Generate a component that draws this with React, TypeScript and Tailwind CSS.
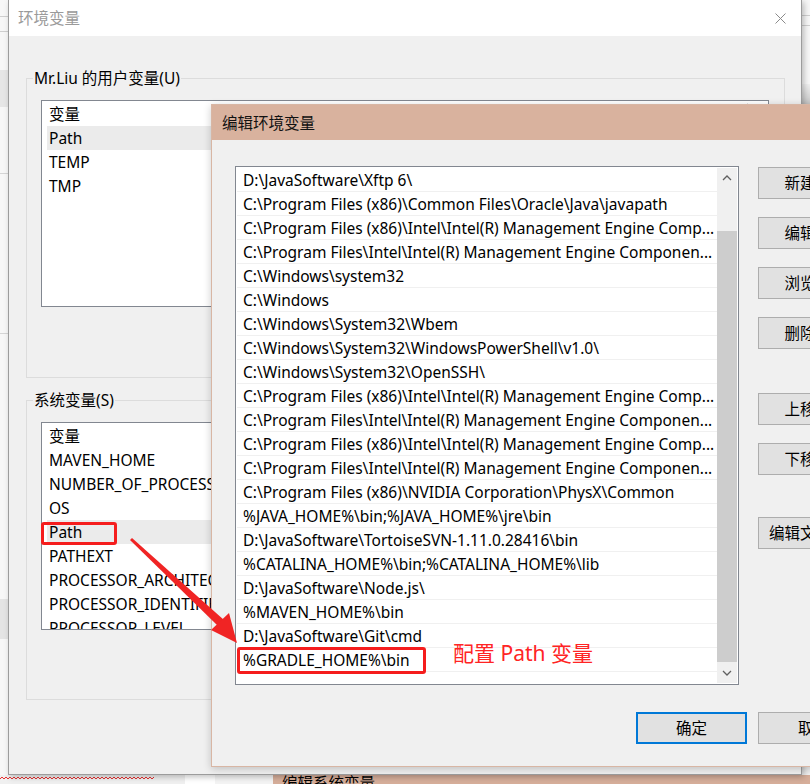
const font = "font-[family-name:'Noto_Sans','Noto_Sans_CJK_SC',sans-serif]";

const userVars = ["Path", "TEMP", "TMP"];

const sysVars = [
  "MAVEN_HOME",
  "NUMBER_OF_PROCESSORS",
  "OS",
  "Path",
  "PATHEXT",
  "PROCESSOR_ARCHITECTURE",
  "PROCESSOR_IDENTIFIER",
  "PROCESSOR_LEVEL",
];

const paths = [
  "D:\\JavaSoftware\\Xftp 6\\",
  "C:\\Program Files (x86)\\Common Files\\Oracle\\Java\\javapath",
  "C:\\Program Files (x86)\\Intel\\Intel(R) Management Engine Comp...",
  "C:\\Program Files\\Intel\\Intel(R) Management Engine Componen...",
  "C:\\Windows\\system32",
  "C:\\Windows",
  "C:\\Windows\\System32\\Wbem",
  "C:\\Windows\\System32\\WindowsPowerShell\\v1.0\\",
  "C:\\Windows\\System32\\OpenSSH\\",
  "C:\\Program Files (x86)\\Intel\\Intel(R) Management Engine Comp...",
  "C:\\Program Files\\Intel\\Intel(R) Management Engine Componen...",
  "C:\\Program Files (x86)\\Intel\\Intel(R) Management Engine Comp...",
  "C:\\Program Files\\Intel\\Intel(R) Management Engine Componen...",
  "C:\\Program Files (x86)\\NVIDIA Corporation\\PhysX\\Common",
  "%JAVA_HOME%\\bin;%JAVA_HOME%\\jre\\bin",
  "D:\\JavaSoftware\\TortoiseSVN-1.11.0.28416\\bin",
  "%CATALINA_HOME%\\bin;%CATALINA_HOME%\\lib",
  "D:\\JavaSoftware\\Node.js\\",
  "%MAVEN_HOME%\\bin",
  "D:\\JavaSoftware\\Git\\cmd",
  "%GRADLE_HOME%\\bin",
];

function VarList({ items, selected, height }: { items: string[]; selected: string; height: string }) {
  return (
    <div className={`ml-[14px] mr-[15px] mt-[12px] overflow-hidden border border-[#828790] bg-white ${height}`}>
      <div className="flex h-[25px] items-center pt-[2px]">
        <div className="w-[705px] shrink-0 pl-[7px]">变量</div>
        <div className="h-full w-px bg-[#e5e5e5]" />
      </div>
      {items.map((name) => (
        <div
          key={name}
          className={`mx-[5px] flex h-[24px] items-center whitespace-nowrap px-[2px] pt-[2px] ${
            name === selected ? "bg-[#ebebeb]" : ""
          }`}
        >
          {name}
        </div>
      ))}
    </div>
  );
}

function Chevron({ up }: { up?: boolean }) {
  return (
    <svg width="10" height="6" viewBox="0 0 10 6">
      <polyline
        points={up ? "1,5 5,1 9,5" : "1,1 5,5 9,1"}
        fill="none"
        stroke="#606060"
        strokeWidth="1.3"
      />
    </svg>
  );
}

function SideButton({ label, className = "" }: { label: string; className?: string }) {
  return (
    <div
      className={`flex h-[32px] w-[84px] shrink-0 items-center justify-center border border-[#adadad] bg-[#e1e1e1] pt-px ${className}`}
    >
      {label}
    </div>
  );
}

export default function App() {
  return (
    <div className={`relative h-[784px] w-[810px] overflow-hidden bg-[#f2f2f2] text-[15.5px] text-black ${font}`}>
      {/* desktop behind the windows */}
      <div className="absolute left-0 top-0 flex h-[784px] w-[8px] flex-col bg-[#f7f7f7]">
        <div className="mt-[16px] h-px bg-[#cfcfcf]" />
        <div className="mt-[14px] h-px bg-[#cfcfcf]" />
        <div className="mt-[38px] h-[37px] bg-[#e6e6e6]" />
        <div className="mt-[66px] h-px bg-[#d5d5d5]" />
        <div className="mt-[159px] h-px bg-[#d5d5d5]" />
        <div className="mt-[265px] h-[40px] bg-[#e4e4e4]" />
      </div>
      <div className="absolute right-0 top-0 flex h-[104px] w-[8px] flex-col bg-[#f7f7f7]">
        <div className="mt-[15px] h-px bg-[#cfcfcf]" />
        <div className="mt-[9px] h-px bg-[#cfcfcf]" />
        <div className="mt-auto h-[20px] bg-gradient-to-b from-[#f0f0f0] to-[#c8c8c8]" />
      </div>
      <div className="absolute left-0 top-[775px] flex h-[9px] w-[810px]">
        <div className="relative w-[185px] bg-[#f0f0f0]">
          <svg className="absolute left-0 top-[1px]" width="155" height="4" viewBox="0 0 155 4">
            <path
              d="M0 3 L2 1 L4 3 L6 1 L8 3 L10 1 L12 3 L14 1 L16 3 L18 1 L20 3 L22 1 L24 3 L26 1 L28 3 L30 1 L32 3 L34 1 L36 3 L38 1 L40 3 L42 1 L44 3 L46 1 L48 3 L50 1 L52 3 L54 1 L56 3 L58 1 L60 3 L62 1 L64 3 L66 1 L68 3 L70 1 L72 3 L74 1 L76 3 L78 1 L80 3 L82 1 L84 3 L86 1 L88 3 L90 1 L92 3 L94 1 L96 3 L98 1 L100 3 L102 1 L104 3 L106 1 L108 3 L110 1 L112 3 L114 1 L116 3 L118 1 L120 3 L122 1 L124 3 L126 1 L128 3 L130 1 L132 3 L134 1 L136 3 L138 1 L140 3 L142 1 L144 3 L146 1 L148 3 L150 1 L152 3 L154 1"
              fill="none"
              stroke="#e83030"
              strokeWidth="1"
            />
          </svg>
        </div>
        <div className="w-[30px] bg-white" />
        <div className="w-[58px] bg-[#f4f4f4]" />
        <div className="flex-1 overflow-hidden bg-[#d6ae9a] pl-[9px]">
          <div className="-mt-[2px] leading-[20px]">编辑系统变量</div>
        </div>
      </div>

      {/* 环境变量 window */}
      <div className="absolute left-[8px] top-0 flex h-[775px] w-[794px] flex-col border-x border-b border-[#9c9c9c] bg-[#f0f0f0] shadow-[2px_2px_6px_rgba(0,0,0,0.25)]">
        <div className="flex h-[36px] shrink-0 items-center justify-between bg-white pl-[9px] pr-[15px]">
          <span className="pt-[2px] text-[#9a9a9a]">环境变量</span>
          <svg width="11" height="11" viewBox="0 0 11 11">
            <path d="M0.5 0.5 L10.5 10.5 M10.5 0.5 L0.5 10.5" stroke="#8a8a8a" strokeWidth="1" />
          </svg>
        </div>

        <fieldset className="ml-[17px] mr-[16px] mt-[32px] border border-[#dcdcdc] pb-[70px]">
          <legend className="ml-[6px] px-[1px] leading-[20px]">Mr.Liu 的用户变量(U)</legend>
          <VarList items={userVars} selected="Path" height="h-[207px]" />
        </fieldset>

        <fieldset className="ml-[17px] mr-[16px] mt-[12px] border border-[#dcdcdc] pb-[69px]">
          <legend className="ml-[6px] px-[1px] leading-[20px]">系统变量(S)</legend>
          <VarList items={sysVars} selected="Path" height="h-[208px]" />
        </fieldset>
      </div>

      {/* 编辑环境变量 dialog */}
      <div className="absolute left-[211px] top-[104px] flex h-[663px] w-[680px] flex-col border border-[#d8b6a4] bg-[#f0f0f0] shadow-[0_2px_8px_rgba(0,0,0,0.2)]">
        <div className="flex h-[35px] shrink-0 items-center bg-[#d9b29e] pl-[10px] pt-[2px] text-[#111]">编辑环境变量</div>
        <div className="flex">
          <div className="ml-[23px] mt-[26px] flex h-[519px] w-[504px] shrink-0 border border-[#828790] bg-white p-px">
            <div className="w-[480px] shrink-0 overflow-hidden">
              {paths.map((p, i) => (
                <div
                  key={i}
                  className="flex h-[24px] items-center overflow-hidden whitespace-nowrap border-b border-[#f0f0f0] pl-[6px] pt-[2px]"
                >
                  {p}
                </div>
              ))}
            </div>
            <div className="flex w-[20px] shrink-0 flex-col bg-[#f0f0f0]">
              <div className="flex h-[21px] items-center justify-center">
                <Chevron up />
              </div>
              <div className="mt-[42px] h-[433px] bg-[#cdcdcd]" />
              <div className="flex h-[21px] items-center justify-center">
                <Chevron />
              </div>
            </div>
          </div>
          <div className="ml-[19px] mt-[27px] flex flex-col">
            <SideButton label="新建" />
            <SideButton label="编辑" className="mt-[18px]" />
            <SideButton label="浏览" className="mt-[18px]" />
            <SideButton label="删除" className="mt-[18px]" />
            <SideButton label="上移" className="mt-[44px]" />
            <SideButton label="下移" className="mt-[18px]" />
            <SideButton label="编辑文本" className="mt-[42px]" />
          </div>
        </div>
        <div className="ml-[424px] mt-[27px] flex gap-[11px]">
          <div className="flex h-[32px] w-[111px] shrink-0 items-center justify-center border-2 border-[#0078d7] bg-[#e1e1e1] pt-px">
            确定
          </div>
          <div className="flex h-[32px] w-[111px] shrink-0 items-center justify-center border border-[#adadad] bg-[#e1e1e1] pt-px">
            取消
          </div>
        </div>
      </div>

      {/* annotations */}
      <div className="absolute left-[41px] top-[522px] h-[23px] w-[76px] rounded-[3px] border-[3px] border-[#f51d1d]" />
      <div className="absolute left-[237px] top-[647px] h-[27px] w-[189px] rounded-[3px] border-[3px] border-[#f51d1d]" />
      <svg className="pointer-events-none absolute left-0 top-0" width="810" height="784" viewBox="0 0 810 784">
        <polygon points="130,540 132,538 224,620 218,626" fill="#f02424" />
        <polygon points="237,643 211,630 229,613" fill="#f02424" />
      </svg>
      <div className="absolute left-[453px] top-[639px] text-[21px] leading-[28px] text-[#ff2424]">配置 Path 变量</div>
    </div>
  );
}
